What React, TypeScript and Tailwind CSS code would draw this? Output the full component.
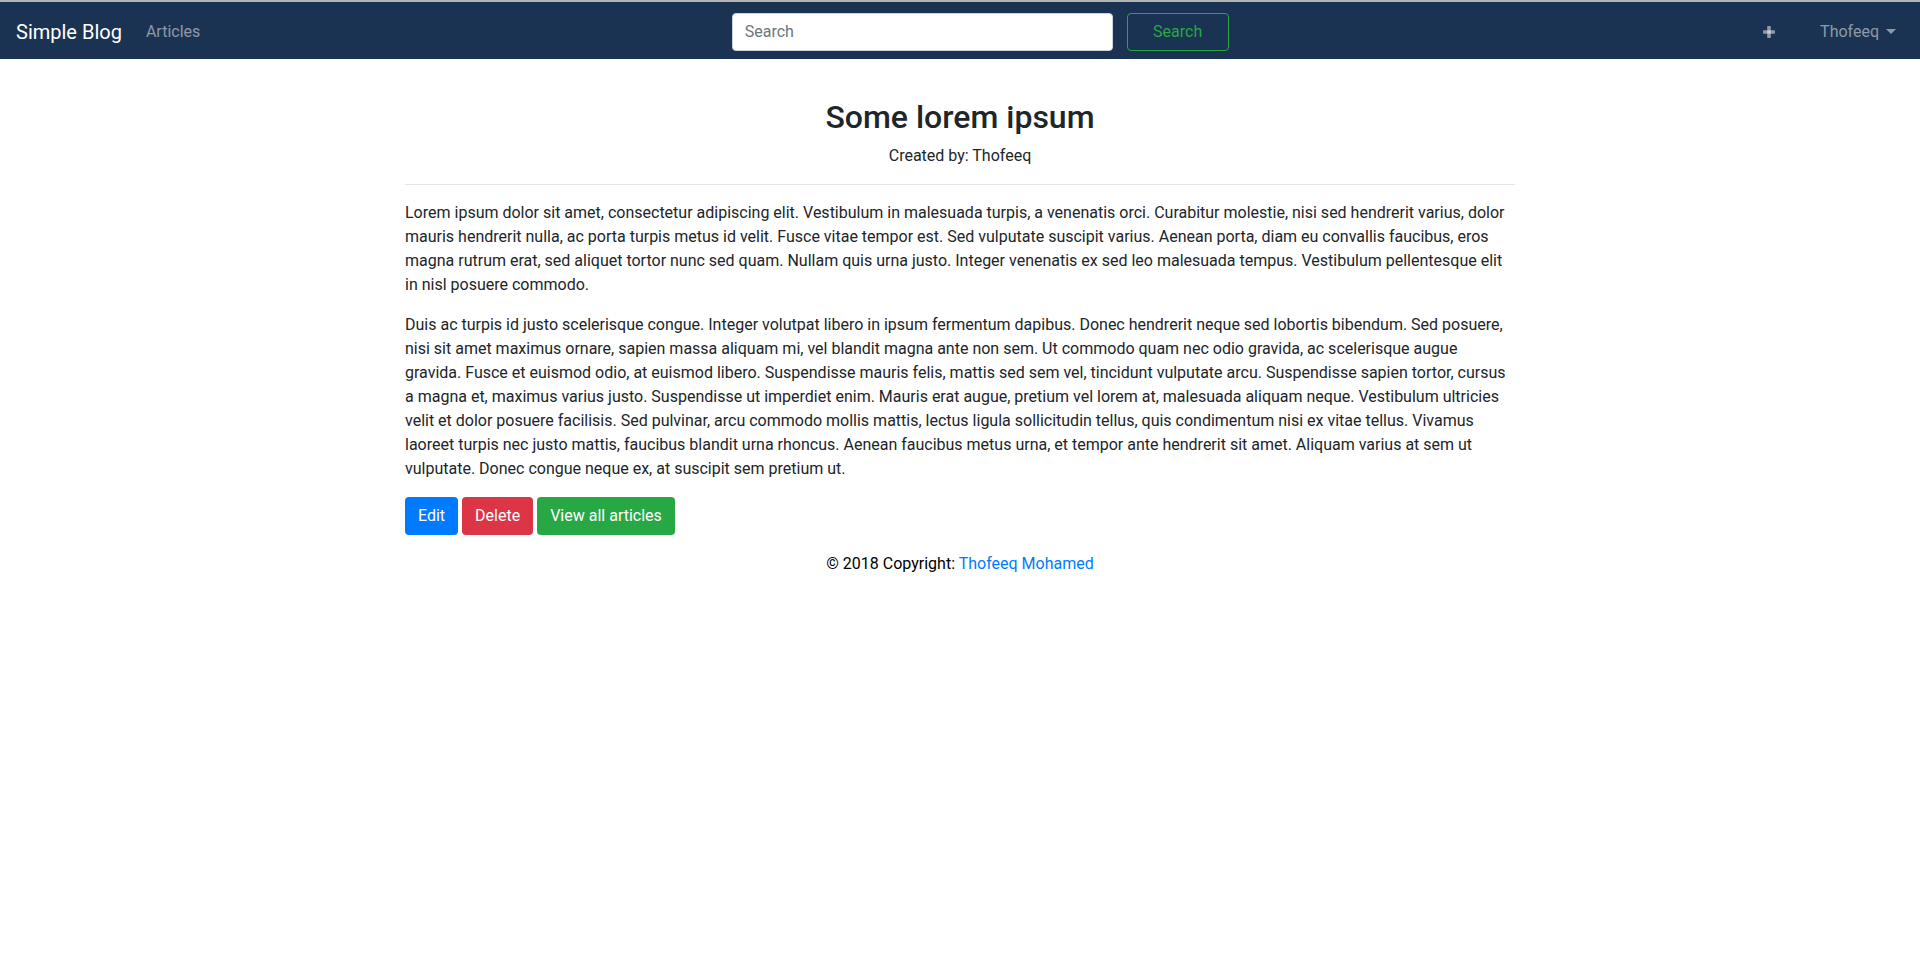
const paragraphs = [
  "Lorem ipsum dolor sit amet, consectetur adipiscing elit. Vestibulum in malesuada turpis, a venenatis orci. Curabitur molestie, nisi sed hendrerit varius, dolor mauris hendrerit nulla, ac porta turpis metus id velit. Fusce vitae tempor est. Sed vulputate suscipit varius. Aenean porta, diam eu convallis faucibus, eros magna rutrum erat, sed aliquet tortor nunc sed quam. Nullam quis urna justo. Integer venenatis ex sed leo malesuada tempus. Vestibulum pellentesque elit in nisl posuere commodo.",
  "Duis ac turpis id justo scelerisque congue. Integer volutpat libero in ipsum fermentum dapibus. Donec hendrerit neque sed lobortis bibendum. Sed posuere, nisi sit amet maximus ornare, sapien massa aliquam mi, vel blandit magna ante non sem. Ut commodo quam nec odio gravida, ac scelerisque augue gravida. Fusce et euismod odio, at euismod libero. Suspendisse mauris felis, mattis sed sem vel, tincidunt vulputate arcu. Suspendisse sapien tortor, cursus a magna et, maximus varius justo. Suspendisse ut imperdiet enim. Mauris erat augue, pretium vel lorem at, malesuada aliquam neque. Vestibulum ultricies velit et dolor posuere facilisis. Sed pulvinar, arcu commodo mollis mattis, lectus ligula sollicitudin tellus, quis condimentum nisi ex vitae tellus. Vivamus laoreet turpis nec justo mattis, faucibus blandit urna rhoncus. Aenean faucibus metus urna, et tempor ante hendrerit sit amet. Aliquam varius at sem ut vulputate. Donec congue neque ex, at suscipit sem pretium ut.",
];

const PlusIcon = () => (
  <svg width="14" height="16" viewBox="0 0 14 16" className="fill-current">
    <rect x="5.2" y="2" width="3.6" height="12" rx="0.8" />
    <rect x="1" y="6.2" width="12" height="3.6" rx="0.8" />
  </svg>
);

const Navbar = () => {
  return (
    <nav className="flex items-center h-[59px] border-t-2 border-[#b4b4b4] bg-[#1b3352] px-4 pt-[2px]">
      <a className="text-[20px] text-white mr-4 cursor-pointer">Simple Blog</a>
      <a className="px-2 text-white/50 cursor-pointer">Articles</a>
      <div className="flex-1 flex justify-center pr-[2px]">
        <form className="flex items-center gap-[14px]">
          <input
            type="text"
            placeholder="Search"
            className="w-[381px] h-[38px] bg-white rounded border border-[#ced4da] px-3 text-[#495057] placeholder:text-[#6c757d] outline-none"
          />
          <button
            type="button"
            className="w-[102px] h-[38px] rounded border border-[#28a745] text-[#28a745]"
          >
            Search
          </button>
        </form>
      </div>
      <div className="flex items-center">
        <a className="px-2 text-white/50 cursor-pointer flex items-center">
          <PlusIcon />
        </a>
        <a className="ml-[28px] px-2 text-white/50 cursor-pointer flex items-center">
          Thofeeq
          <span className="ml-[7px] w-0 h-0 border-l-[5px] border-r-[5px] border-t-[5px] border-l-transparent border-r-transparent border-t-white/50"></span>
        </a>
      </div>
    </nav>
  );
};

const App = () => {
  return (
    <div className="min-h-[953px] bg-white text-[#212529] text-base leading-6 font-['Roboto','Liberation_Sans',sans-serif]">
      <Navbar />
      <div className="w-[1140px] mx-auto px-[15px] pt-[39px]">
        <h2 className="text-[32px] leading-[1.2] font-medium text-center mb-2">
          Some lorem ipsum
        </h2>
        <p className="text-center">Created by: Thofeeq</p>
        <hr className="mt-4 mb-4 border-0 border-t border-black/10" />
        {paragraphs.map((p, i) => (
          <p key={i} className="mb-4">
            {p}
          </p>
        ))}
        <div className="flex gap-1">
          <button className="h-[38px] px-[13px] rounded bg-[#007bff] text-white">
            Edit
          </button>
          <button className="h-[38px] px-[13px] rounded bg-[#dc3545] text-white">
            Delete
          </button>
          <button className="h-[38px] px-[13px] rounded bg-[#28a745] text-white">
            View all articles
          </button>
        </div>
        <footer className="text-center text-black py-[17px]">
          © 2018 Copyright:{" "}
          <a className="text-[#007bff] cursor-pointer">Thofeeq Mohamed</a>
        </footer>
      </div>
    </div>
  );
};

export default App;
